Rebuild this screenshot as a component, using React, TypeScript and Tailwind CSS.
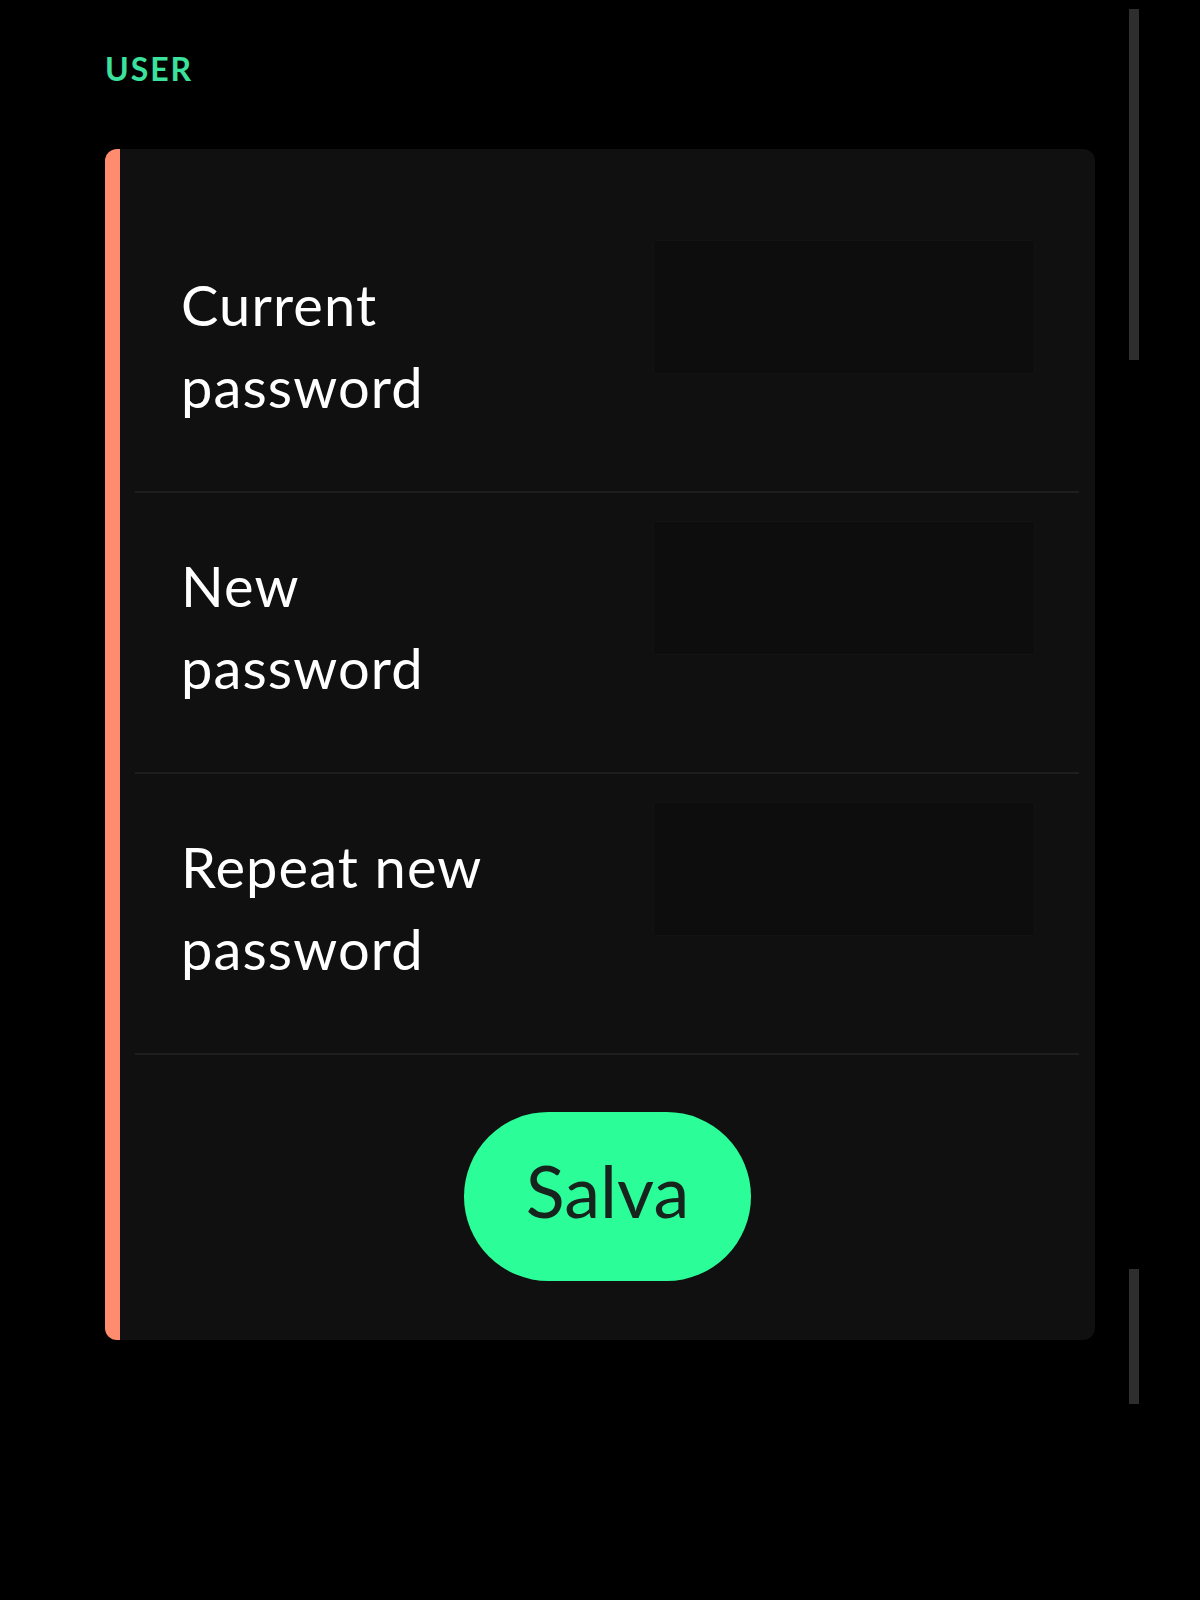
const fields = ["Current password", "New password", "Repeat new password"];

function FieldRow({ label }: { label: string }) {
  return (
    <div className="flex items-start justify-between border-b-2 border-[#1e1e1e] pl-[46px] pr-[44px] pt-[28px] pb-[63px]">
      <label className="mt-[24px] w-[330px] text-[56px] leading-[82px] tracking-[0.02em] text-white">{label}</label>
      <input
        type="password"
        className="h-[134px] w-[382px] shrink-0 rounded-[2px] border border-[#131313] bg-[#0d0d0d] outline-none"
      />
    </div>
  );
}

export default function App() {
  return (
    <div className="relative min-h-[1600px] bg-black px-[105px] pt-[51px]" style={{ fontFamily: "Lato, 'Noto Sans', sans-serif" }}>
      <h2 className="text-[32px] font-bold leading-[36px] tracking-[0.06em] text-[#3ae29d]">USER</h2>

      <div className="mt-[62px] w-[990px] rounded-[12px] border-l-[15px] border-[#ff8c6e] bg-[#101010] pt-[63px]">
        <div className="ml-[15px] mr-[16px]">
          {fields.map((f) => (
            <FieldRow key={f} label={f} />
          ))}
        </div>
        <div className="flex justify-center pt-[57px] pb-[59px]">
          <button className="flex h-[169px] w-[287px] items-center justify-center rounded-full bg-[#2bfe98] pb-[14px] text-[72px] leading-none text-[#17241e]">
            Salva
          </button>
        </div>
      </div>

      {/* overlay scrollbars */}
      <div className="absolute left-[1129px] top-[9px] h-[351px] w-[10px] bg-[#2e2e2e]" />
      <div className="absolute left-[1129px] top-[1269px] h-[135px] w-[10px] bg-[#2e2e2e]" />
    </div>
  );
}
